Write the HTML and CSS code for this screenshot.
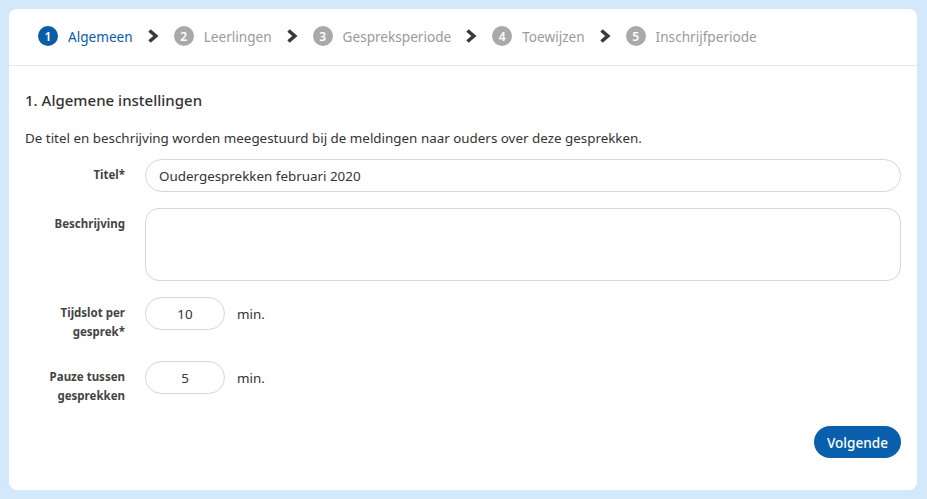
FILE: index.html
```html
<!DOCTYPE html>
<html lang="nl">
<head>
<meta charset="utf-8">
<title>Oudergesprekken</title>
<link rel="stylesheet" href="styles.css">
</head>
<body>
<div class="card">
  <nav class="steps">
    <div class="step active"><span class="num">1</span><span class="label">Algemeen</span></div>
    <svg class="chev" viewBox="0 0 12 14"><path d="M2.5 1.5 L8.8 7 L2.5 12.5" fill="none" stroke="#3a3a3a" stroke-width="3.6"/></svg>
    <div class="step"><span class="num">2</span><span class="label">Leerlingen</span></div>
    <svg class="chev" viewBox="0 0 12 14"><path d="M2.5 1.5 L8.8 7 L2.5 12.5" fill="none" stroke="#3a3a3a" stroke-width="3.6"/></svg>
    <div class="step"><span class="num">3</span><span class="label">Gespreksperiode</span></div>
    <svg class="chev" viewBox="0 0 12 14"><path d="M2.5 1.5 L8.8 7 L2.5 12.5" fill="none" stroke="#3a3a3a" stroke-width="3.6"/></svg>
    <div class="step"><span class="num">4</span><span class="label">Toewijzen</span></div>
    <svg class="chev" viewBox="0 0 12 14"><path d="M2.5 1.5 L8.8 7 L2.5 12.5" fill="none" stroke="#3a3a3a" stroke-width="3.6"/></svg>
    <div class="step"><span class="num">5</span><span class="label">Inschrijfperiode</span></div>
  </nav>
  <section class="body">
    <h2 class="title">1. Algemene instellingen</h2>
    <p class="intro">De titel en beschrijving worden meegestuurd bij de meldingen naar ouders over deze gesprekken.</p>
    <div class="row">
      <label class="lbl">Titel*</label>
      <div class="field"><div class="input wide">Oudergesprekken februari 2020</div></div>
    </div>
    <div class="row">
      <label class="lbl">Beschrijving</label>
      <div class="field"><div class="textarea"></div></div>
    </div>
    <div class="row">
      <label class="lbl two">Tijdslot per gesprek*</label>
      <div class="field inline"><div class="input small">10</div><span class="unit">min.</span></div>
    </div>
    <div class="row">
      <label class="lbl two">Pauze tussen gesprekken</label>
      <div class="field inline"><div class="input small">5</div><span class="unit">min.</span></div>
    </div>
    <div class="actions"><button class="btn">Volgende</button></div>
  </section>
</div>
</body>
</html>
```
FILE: styles.css
```css
* { box-sizing: border-box; }
html, body { margin: 0; padding: 0; }
body {
  background: #d3e8fb;
  font-family: "Noto Sans", "Open Sans", sans-serif;
  color: #333;
  padding: 9px 10px 9px 9px;
  height: 499px;
}
.card {
  background: #fff;
  border-radius: 8px;
  height: 481px;
  display: flex;
  flex-direction: column;
}
.steps {
  display: flex;
  align-items: center;
  height: 57px;
  padding: 0 0 2px 29px;
  border-bottom: 1px solid #e6e6e6;
}
.step {
  display: flex;
  align-items: center;
  gap: 10px;
  font-size: 13.6px;
  color: #9a9a9a;
}
.step .num {
  width: 20px;
  height: 20px;
  border-radius: 50%;
  background: #a9a9a9;
  color: #fff;
  font-size: 12px;
  font-weight: 600;
  display: flex;
  align-items: center;
  justify-content: center;
}
.step.active { color: #0a5ca6; }
.step.active .num { background: #0a5ca6; }
.chev {
  width: 12px;
  height: 14px;
  margin: 0 15px 0 14px;
}
.body {
  padding: 23px 16px 0 16px;
  display: flex;
  flex-direction: column;
}
.title {
  margin: 0;
  font-size: 15px;
  font-weight: 500;
  color: #333;
  line-height: 22px;
}
.intro {
  margin: 18px 0 0 0;
  font-size: 13.4px;
  line-height: 18px;
  color: #333;
}
.row {
  display: flex;
  gap: 20px;
  margin-top: 16px;
}
.intro + .row { margin-top: 12px; }
.lbl {
  width: 100px;
  text-align: right;
  font-size: 11.5px;
  font-weight: 700;
  color: #444;
  line-height: 19px;
  padding-top: 6px;
}
.lbl.two { padding-bottom: 4px; }
.field { flex: 1; }
.field.inline { display: flex; align-items: center; gap: 12px; align-self: flex-start; }
.input {
  height: 33px;
  border: 1px solid #d6d6d6;
  border-radius: 17px;
  font-size: 13.4px;
  display: flex;
  align-items: center;
  color: #333;
}
.input.wide { padding-left: 13px; }
.input.small { width: 80px; justify-content: center; }
.textarea {
  height: 73px;
  border: 1px solid #d6d6d6;
  border-radius: 14px;
}
.unit { font-size: 13.4px; color: #333; }
.actions {
  display: flex;
  justify-content: flex-end;
  margin-top: 17px;
}
.btn {
  font-family: inherit;
  background: #0a5fac;
  color: #fff;
  border: none;
  border-radius: 16px;
  height: 32px;
  width: 87px;
  font-size: 13.6px;
  font-weight: 500;
}
```
